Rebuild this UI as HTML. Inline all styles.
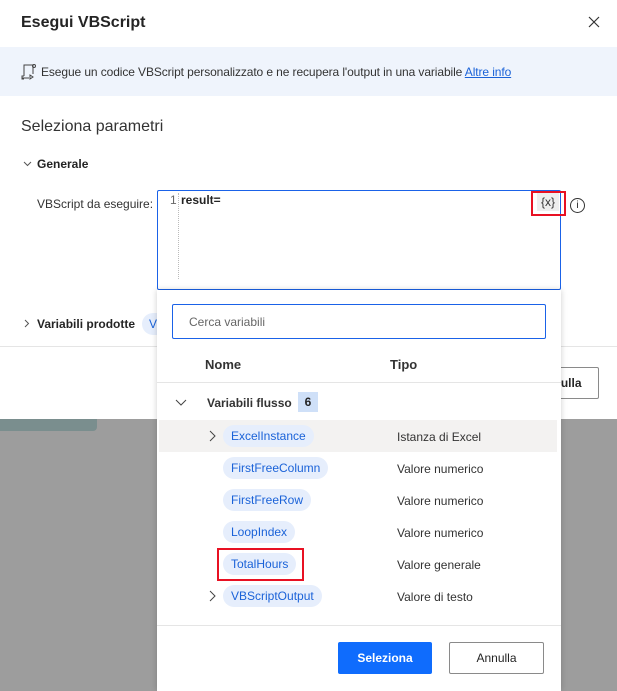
<!DOCTYPE html><html><head><style>
body{margin:0;width:617px;height:691px;background:#9d9d9d;font-family:"Liberation Sans",sans-serif;position:relative;overflow:hidden;color:#242424}
.a{position:absolute}
.dlg{left:0;top:0;width:617px;height:419px;background:#fff}
.pill{position:absolute;left:223px;height:22px;line-height:22px;padding:0 8px;border-radius:11px;background:#e6eefc;color:#1a62d8;font-size:12px}
.t{position:absolute;left:397px;font-size:12px;color:#333}
.chev{position:absolute;left:209px}
</style></head><body>
<div class="a" style="left:0;top:419px;width:97px;height:12px;background:#7a8e8e;border-radius:0 0 4px 0"></div>
<div class="a dlg">
 <div class="a" style="left:21px;top:14px;font-size:16px;font-weight:bold">Esegui VBScript</div>
 <svg class="a" style="left:588px;top:16px" width="12" height="12"><path d="M1 1L11 11M11 1L1 11" stroke="#333" stroke-width="1.2"/></svg>
 <div class="a" style="left:0;top:47px;width:617px;height:49px;background:#eff4fc"></div>
 <svg class="a" style="left:21px;top:63px" width="16" height="18"><path d="M3 13V2h9v9M1 15h7M3 13H1v3h2M9 12l3 2-3 2z" stroke="#444" fill="none" stroke-width="1"/><circle cx="13" cy="3" r="1.5" stroke="#444" fill="none"/></svg>
 <div class="a" style="left:41px;top:65px;font-size:12px;color:#333;letter-spacing:-0.1px">Esegue un codice VBScript personalizzato e ne recupera l'output in una variabile <span style="color:#1a62d8;text-decoration:underline">Altre info</span></div>
 <div class="a" style="left:21px;top:118px;font-size:16px;color:#333">Seleziona parametri</div>
 <svg class="a" style="left:23px;top:161px" width="9" height="6"><path d="M1 1l3.5 3.5L8 1" stroke="#555" fill="none"/></svg>
 <div class="a" style="left:37px;top:157px;font-size:12px;font-weight:bold">Generale</div>
 <div class="a" style="left:37px;top:197px;font-size:12px;color:#333">VBScript da eseguire:</div>
 <div class="a" style="left:157px;top:190px;width:402px;height:98px;border:1px solid #1a62e8;border-radius:2px"></div>
 <div class="a" style="left:170px;top:193px;font-size:12px;color:#666">1</div>
 <div class="a" style="left:178px;top:193px;height:86px;border-left:1px dotted #bbb"></div>
 <div class="a" style="left:181px;top:193px;font-size:12px;font-weight:bold">result=</div>
 <div class="a" style="left:531px;top:191px;width:31px;height:21px;border:2px solid #e81123;box-sizing:content-box"></div>
 <div class="a" style="left:537px;top:193px;width:22px;height:18px;background:#eee;font-size:12px;text-align:center;line-height:18px;color:#333">{x}</div>
 <div class="a" style="left:570px;top:198px;width:13px;height:13px;border:1px solid #333;border-radius:50%;font-size:10px;text-align:center;line-height:13px">i</div>
 <svg class="a" style="left:24px;top:319px" width="6" height="9"><path d="M1 1l3.5 3.5L1 8" stroke="#555" fill="none"/></svg>
 <div class="a" style="left:37px;top:317px;font-size:12px;font-weight:bold">Variabili prodotte</div>
 <div class="a" style="left:142px;top:313px;width:30px;height:22px;border-radius:11px;background:#e6eefc;color:#1a62d8;font-size:12px;line-height:22px;padding-left:7px;box-sizing:border-box">VB</div>
 <div class="a" style="left:0;top:346px;width:617px;height:1px;background:#e5e5e5"></div>
 <div class="a" style="left:520px;top:367px;width:77px;height:30px;border:1px solid #8a8a8a;border-radius:2px;font-size:12px;line-height:30px;text-align:center;font-weight:bold">Annulla</div>
</div>
<div class="a" style="left:157px;top:290px;width:404px;height:401px;background:#fff;box-shadow:0 0 6px rgba(0,0,0,.2)">
 <div class="a" style="left:15px;top:14px;width:372px;height:33px;border:1px solid #1a62e8;border-radius:2px"></div>
 <div class="a" style="left:32px;top:25px;font-size:12px;color:#666">Cerca variabili</div>
 <div class="a" style="left:48px;top:67px;font-size:13px;font-weight:bold;color:#333">Nome</div>
 <div class="a" style="left:233px;top:67px;font-size:13px;font-weight:bold;color:#333">Tipo</div>
 <div class="a" style="left:0;top:92px;width:404px;height:1px;background:#e5e5e5"></div>
 <svg class="a" style="left:18px;top:109px" width="12" height="8"><path d="M1 1l5 5 5-5" stroke="#444" fill="none"/></svg>
 <div class="a" style="left:50px;top:106px;font-size:12px;font-weight:bold;color:#333">Variabili flusso</div>
 <div class="a" style="left:141px;top:102px;width:20px;height:20px;background:#cfe0f8;font-size:12px;line-height:20px;text-align:center;font-weight:bold">6</div>
 <div class="a" style="left:2px;top:130px;width:398px;height:32px;background:#f3f2f1"></div>
</div>
<svg class="chev" style="top:430px" width="7" height="12"><path d="M1 1l5 5-5 5" stroke="#444" fill="none"/></svg>
<div class="pill" style="top:425px">ExcelInstance</div><div class="t" style="top:430px">Istanza di Excel</div>
<div class="pill" style="top:457px">FirstFreeColumn</div><div class="t" style="top:462px">Valore numerico</div>
<div class="pill" style="top:489px">FirstFreeRow</div><div class="t" style="top:494px">Valore numerico</div>
<div class="pill" style="top:521px">LoopIndex</div><div class="t" style="top:526px">Valore numerico</div>
<div class="a" style="left:217px;top:548px;width:83px;height:29px;border:2px solid #e81123"></div>
<div class="pill" style="top:553px">TotalHours</div><div class="t" style="top:558px">Valore generale</div>
<svg class="chev" style="top:590px" width="7" height="12"><path d="M1 1l5 5-5 5" stroke="#444" fill="none"/></svg>
<div class="pill" style="top:585px">VBScriptOutput</div><div class="t" style="top:590px">Valore di testo</div>
<div class="a" style="left:157px;top:625px;width:404px;height:1px;background:#e5e5e5"></div>
<div class="a" style="left:338px;top:642px;width:94px;height:32px;background:#0f6cfd;border-radius:2px;color:#fff;font-size:12px;font-weight:bold;line-height:32px;text-align:center">Seleziona</div>
<div class="a" style="left:449px;top:642px;width:93px;height:30px;border:1px solid #8a8a8a;border-radius:2px;font-size:12px;line-height:30px;text-align:center">Annulla</div>
</body></html>
